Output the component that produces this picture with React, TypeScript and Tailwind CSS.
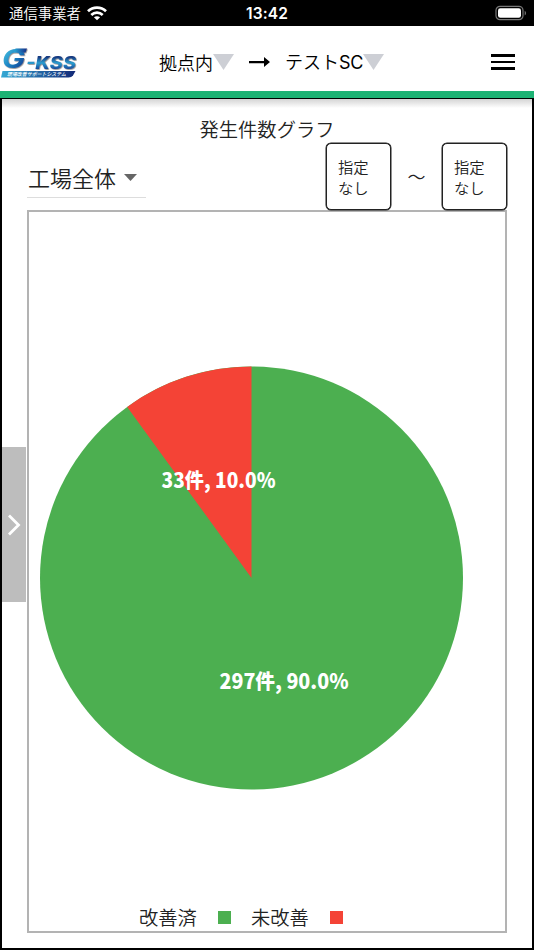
import { ReactNode } from 'react';

const slices = [
  { label: '改善済', count: 297, percent: 90, color: '#4caf50', labelX: 284, labelY: 688.5, width: 129 },
  { label: '未改善', count: 33, percent: 10, color: '#f44336', labelX: 218.5, labelY: 487.5, width: 114 },
];

const CX = 251.5;
const CY = 578;
const R = 211.5;

function StatusBar() {
  return (
    <div className="grid h-[26px] grid-cols-3 items-center bg-black text-white">
      <div className="flex items-center gap-[6px] pl-[9px]">
        <span className="text-[14.4px] leading-[26px] font-[350] whitespace-nowrap">通信事業者</span>
        <svg width="20" height="15" viewBox="0 0 20 15" fill="none" stroke="white" strokeWidth="2.7">
          <path d="M1 5.3C6 .4 14 .4 19 5.3" />
          <path d="M4.3 8.9C7.5 5.9 12.5 5.9 15.7 8.9" />
          <path d="M10 14.2 6.9 11.3C8.6 9.8 11.4 9.8 13.1 11.3Z" fill="white" stroke="none" />
        </svg>
      </div>
      <div className="pt-[2px] text-center font-[Inter,sans-serif] text-[15.5px] font-semibold tracking-[0.1px]">13:42</div>
      <div className="flex justify-end pr-[7px]">
        <svg width="32" height="16" viewBox="0 0 32 16">
          <rect x="1" y="1.3" width="27" height="13.4" rx="4" fill="none" stroke="#777" strokeWidth="1.2" />
          <rect x="3" y="3.2" width="23" height="9.6" rx="2.3" fill="white" />
          <path d="M29.7 5.8V10.4C31.5 9.6 31.5 6.6 29.7 5.8Z" fill="#777" />
        </svg>
      </div>
    </div>
  );
}

function Logo() {
  return (
    <svg width="80" height="36" viewBox="0 0 80 36" className="shrink-0">
      <defs>
        <linearGradient id="mark" x1="0" y1="0" x2="1" y2="1">
          <stop offset="0" stopColor="#58d7e8" />
          <stop offset="0.5" stopColor="#1b82c4" />
          <stop offset="1" stopColor="#101f78" />
        </linearGradient>
        <linearGradient id="word" x1="0" y1="0" x2="0" y2="1">
          <stop offset="0.2" stopColor="#16377f" />
          <stop offset="0.5" stopColor="#2c9fd0" />
          <stop offset="0.85" stopColor="#123b92" />
        </linearGradient>
        <linearGradient id="bar" x1="0" y1="0" x2="1" y2="0">
          <stop offset="0" stopColor="#2aa9d8" />
          <stop offset="1" stopColor="#152c86" />
        </linearGradient>
        <linearGradient id="strip" x1="0" y1="0" x2="1" y2="0">
          <stop offset="0" stopColor="#36a9d4" />
          <stop offset="1" stopColor="#122877" />
        </linearGradient>
        <filter id="relief" x="-10%" y="-10%" width="125%" height="130%">
          <feDropShadow dx="0.7" dy="0.7" stdDeviation="0.4" floodColor="#444" floodOpacity="0.7" />
        </filter>
      </defs>
      <g fontFamily="Inter, sans-serif" fontStyle="italic" filter="url(#relief)">
        <text x="2" y="26" fontSize="25" fontWeight="700" textLength="23" lengthAdjust="spacingAndGlyphs" fill="url(#mark)">G</text>
        <path d="M15.5 6.5H27L25.5 10.5H14Z" fill="url(#bar)" />
        <text x="26" y="27" fontSize="17" fontWeight="800" textLength="50" lengthAdjust="spacingAndGlyphs" fill="url(#word)">-KSS</text>
      </g>
      <path d="M2.5 29H75.5L73 33.5Q71.5 35.5 68.5 35.5H1Z" fill="url(#strip)" />
      <text x="7" y="34" fontSize="5" fontWeight="500" fontStyle="italic" textLength="59" lengthAdjust="spacingAndGlyphs" fill="white">
        現場改善サポートシステム
      </text>
    </svg>
  );
}

function Triangle() {
  return (
    <svg width="21" height="16" viewBox="0 0 21 16" className="-mt-px">
      <path d="M0 0H21L10.5 16Z" fill="#cdcfd5" />
    </svg>
  );
}

function Header() {
  return (
    <header className="flex h-[72px] items-center border-b-[7px] border-[#1db374] bg-white pt-[7px] text-[18px] text-black">
      <div className="-mt-[4px] flex">
        <Logo />
      </div>
      <div className="ml-[79px] flex items-center font-[350]">
        <span className="w-[54px] whitespace-nowrap">拠点内</span>
        <Triangle />
      </div>
      <svg width="22" height="12" viewBox="0 0 22 12" className="ml-[15px]">
        <path d="M0 5H15V1L21 6L15 11V7.3H0Z" fill="black" />
      </svg>
      <div className="ml-[14px] flex items-center font-[350]">
        <span className="w-[78px] whitespace-nowrap">
          テスト<span className="font-[Inter,sans-serif] text-[18px] font-normal tracking-[-0.2px]">SC</span>
        </span>
        <Triangle />
      </div>
      <button className="mr-[19px] ml-auto flex flex-col gap-[4px]">
        <span className="h-[2.6px] w-6 bg-black" />
        <span className="h-[2.6px] w-6 bg-black" />
        <span className="h-[2.6px] w-6 bg-black" />
      </button>
    </header>
  );
}

function DateBox({ children }: { children: ReactNode }) {
  return (
    <button className="h-[67px] w-[65px] rounded-[5px] border border-[#222] bg-white pt-px pl-[11px] text-left text-[15.3px] leading-[21.5px] font-[350] shadow-[0_0_0_0.5px_#222]">
      {children}
    </button>
  );
}

function PieChart() {
  const angle = (slices[1].percent / 100) * 2 * Math.PI;
  const x = CX - R * Math.sin(angle);
  const y = CY - R * Math.cos(angle);

  return (
    <svg width="476" height="691" viewBox="29 212 476 691" className="shrink-0">
      <circle cx={CX} cy={CY} r={R} fill={slices[0].color} />
      <path d={`M${CX} ${CY}L${x} ${y}A${R} ${R} 0 0 1 ${CX} ${CY - R}Z`} fill={slices[1].color} />
      {slices.map((slice) => (
        <text
          key={slice.label}
          x={slice.labelX}
          y={slice.labelY}
          textAnchor="middle"
          textLength={slice.width}
          lengthAdjust="spacingAndGlyphs"
          fontSize="20.5"
          fontWeight="900"
          fontFamily="'Noto Sans CJK JP', sans-serif"
          fill="white"
        >
          {`${slice.count}件, ${slice.percent.toFixed(1)}%`}
        </text>
      ))}
    </svg>
  );
}

export default function App() {
  return (
    <div className="flex h-[950px] w-[534px] flex-col overflow-hidden bg-white font-['Noto_Sans_CJK_JP',sans-serif] text-[#222]">
      <StatusBar />
      <Header />
      <main className="relative flex flex-1 flex-col border-x-2 border-t border-b-2 border-black px-[25px]">
        <div className="absolute inset-x-0 top-0 h-[9px] bg-gradient-to-b from-[#d4d4d4] to-white" />
        <h1 className="relative mt-[17px] text-center text-[19.3px] leading-[27px] font-[350]">発生件数グラフ</h1>
        <div className="flex h-[67px] items-start justify-between">
          <button className="mt-[14px] flex h-[41px] w-[119px] items-center border-b border-[#ddd] text-[22px] font-[350]">
            <span className="w-[97px] pl-px text-left">工場全体</span>
            <svg width="13" height="7" viewBox="0 0 13 7">
              <path d="M0 0H13L6.5 7Z" fill="#666" />
            </svg>
          </button>
          <div className="relative flex items-center">
            <DateBox>指定<br />なし</DateBox>
            <span className="w-[51px] text-center text-[18px] font-[350]">～</span>
            <DateBox>指定<br />なし</DateBox>
          </div>
        </div>
        <section className="flex h-[723px] flex-col border-2 border-[#b3b3b3]">
          <PieChart />
          <div className="flex items-center pl-[110px] text-[19.3px] leading-[28px] font-[350]">
            {slices.map((slice) => (
              <div key={slice.label} className="flex w-[112px] items-center">
                <span className="w-[79px]">{slice.label}</span>
                <span className="size-[13px]" style={{ backgroundColor: slice.color }} />
              </div>
            ))}
          </div>
        </section>
        <button className="absolute top-[348px] left-0 flex h-[155px] w-[24px] items-center justify-center bg-[#bdbdbd]">
          <svg width="14" height="22" viewBox="0 0 14 22" fill="none" stroke="white" strokeWidth="2.8">
            <path d="M2 1.5 11.5 11 2 20.5" />
          </svg>
        </button>
      </main>
    </div>
  );
}
